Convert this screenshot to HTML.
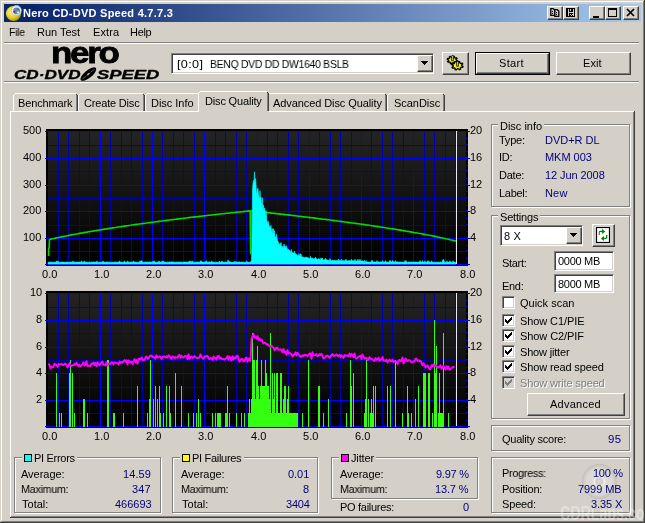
<!DOCTYPE html>
<html><head><meta charset="utf-8"><title>Nero CD-DVD Speed 4.7.7.3</title>
<style>
html,body{margin:0;padding:0}
body{width:645px;height:523px;overflow:hidden;background:#D4D0C8;position:relative;font:11px "Liberation Sans",sans-serif}
body>div,body>svg,body>span{position:absolute;display:block}
.t{will-change:transform;transform-origin:0 0;white-space:nowrap;line-height:13px;height:13px;font-size:11px;font-family:"Liberation Sans",sans-serif;color:#000}
.btn{background:#D4D0C8;box-sizing:border-box;border:1px solid;border-color:#fff #404040 #404040 #fff;box-shadow:inset -1px -1px 0 #808080}
.sunk{box-sizing:border-box;border:1px solid;border-color:#808080 #fff #fff #808080;box-shadow:inset 1px 1px 0 #404040,inset -1px -1px 0 #D4D0C8}
.grp i{position:absolute;box-sizing:border-box;left:0;top:0;right:1px;bottom:1px;border:1px solid #808080;box-shadow:inset 1px 1px 0 #fff,1px 1px 0 #fff}
.nero,.cds,.wm{will-change:transform}
.nero{left:50.6px;top:38px;font:bold 30px "Liberation Sans",sans-serif;letter-spacing:-2px;line-height:30px;transform:scaleX(1.165);transform-origin:0 0;color:#000;-webkit-text-stroke:0.8px #000}
.cds{-webkit-text-stroke:0.35px #000;top:68px;font:italic bold 12.5px "Liberation Sans",sans-serif;line-height:14px;color:#000;transform-origin:0 0;white-space:nowrap}
#cds1{left:13.5px;transform:scaleX(1.37)}
#cds2{left:96.5px;transform:scaleX(1.47)}
.wm{left:560px;top:503px;font:bold 20px "Liberation Sans",sans-serif;line-height:20px;color:rgba(255,255,255,0.36);white-space:nowrap;transform:scaleX(0.71);transform-origin:0 0}
</style></head><body>
<div style="left:1px;top:1px;width:1px;height:521px;background:#fff;"></div>
<div style="left:1px;top:1px;width:643px;height:1px;background:#fff;"></div>
<div style="left:644px;top:0px;width:1px;height:523px;background:#404040;"></div>
<div style="left:0px;top:522px;width:645px;height:1px;background:#404040;"></div>
<div style="left:643px;top:1px;width:1px;height:521px;background:#808080;"></div>
<div style="left:1px;top:521px;width:643px;height:1px;background:#808080;"></div>
<div style="left:4px;top:4px;width:637px;height:18px;background:linear-gradient(90deg,#0A246A 0%,#0A246A 4%,#A6CAF0 100%)"></div>
<svg style="left:5px;top:4px" width="18" height="18" viewBox="0 0 18 18">
<defs><radialGradient id="dg" cx="40%" cy="40%" r="65%"><stop offset="0" stop-color="#fff8a0"/><stop offset="0.55" stop-color="#e8d428"/><stop offset="1" stop-color="#a89010"/></radialGradient></defs>
<circle cx="8.5" cy="9.5" r="7.6" fill="url(#dg)"/>
<circle cx="11.3" cy="6.6" r="5" fill="#e8eef4" stroke="#b8c0c8" stroke-width="0.8"/>
<circle cx="11.6" cy="6.9" r="3.4" fill="#2c9be0"/>
<path d="M9.2 5.2 L13.2 8.4" stroke="#f06030" stroke-width="1.6"/>
<circle cx="9.3" cy="7.8" r="1" fill="#a01818"/><circle cx="12.8" cy="5.2" r="0.9" fill="#2a8a2a"/><circle cx="13" cy="8.6" r="1" fill="#fff"/>
</svg>
<div class="btn " style="left:547px;top:6px;width:16px;height:14px"></div>
<div class="btn " style="left:563px;top:6px;width:16px;height:14px"></div>
<div class="btn " style="left:589px;top:6px;width:16px;height:14px"></div>
<div class="btn " style="left:605px;top:6px;width:16px;height:14px"></div>
<div class="btn " style="left:623px;top:6px;width:16px;height:14px"></div>
<svg style="left:547px;top:6px" width="92" height="14" viewBox="0 0 92 14" shape-rendering="crispEdges">
<g fill="#D4D0C8" stroke="#000" stroke-width="1.300" shape-rendering="auto">
<path d="M3.800 2.700h2.400l1.600 1.400v5.300h-4z"/>
<path d="M7.800 3.700h2.400l1.600 1.400v5.300h-4z"/>
</g>
<rect x="5" y="5" width="1" height="1" fill="#000"/><rect x="5" y="7" width="1" height="1" fill="#000"/>
<rect x="9" y="6" width="1" height="1" fill="#000"/><rect x="9" y="8" width="1" height="1" fill="#000"/>
<rect x="19" y="2" width="9" height="9" fill="#000"/>
<g fill="#D4D0C8"><rect x="21" y="3" width="1" height="7"/><rect x="26" y="3" width="1" height="7"/><rect x="22" y="6" width="4" height="1"/>
<rect x="23" y="3" width="1" height="2"/><rect x="23" y="8" width="1" height="1"/><rect x="25" y="8" width="1" height="1"/><rect x="24" y="9" width="1" height="1"/></g>
<rect x="46" y="10" width="6" height="2" fill="#000"/>
<path d="M61.500 3.500h8v7h-8z" fill="none" stroke="#000" stroke-width="1"/><rect x="61" y="2" width="9" height="2" fill="#000"/>
<path d="M80 3l7 7M87 3l-7 7" stroke="#000" stroke-width="1.700" shape-rendering="auto"/>
</svg>
<div style="left:4px;top:42px;width:635px;height:1px;background:#808080;"></div>
<div style="left:4px;top:43px;width:635px;height:1px;background:#fff;"></div>
<div style="left:4px;top:81px;width:635px;height:1px;background:#808080;"></div>
<div style="left:4px;top:82px;width:635px;height:1px;background:#fff;"></div>
<div class="nero" id="nero">nero</div>
<div class="cds" id="cds1">CD·DVD</div>
<div class="cds" id="cds2">SPEED</div>
<svg style="left:78px;top:64px" width="21" height="20" viewBox="0 0 21 20">
<g transform="rotate(-39 10.400 10.100)"><ellipse cx="10.400" cy="10.100" rx="9.600" ry="3.800" fill="#000"/>
<path d="M2.500 10.100H18.300" stroke="#D4D0C8" stroke-width="0.500" stroke-dasharray="5.500 1.500 2 1.500 6" opacity="0.800"/>
<ellipse cx="10.400" cy="10.100" rx="1.700" ry="0.900" fill="#A8A6A0"/></g>
</svg>
<div class="sunk" style="left:171px;top:53px;width:263px;height:21px;background:#fff"></div>
<div class="btn " style="left:417px;top:55px;width:16px;height:17px"></div>
<svg style="left:421px;top:61px" width="7" height="4" viewBox="0 0 7 4" shape-rendering="crispEdges"><path d="M0 0h7L3.500 4z" fill="#000"/></svg>
<div class="btn " style="left:442px;top:52px;width:27px;height:23px"></div>
<svg style="left:442px;top:52px" width="27" height="23" viewBox="0 0 27 23">
<path d="M15.40 8.77L15.10 9.51L13.41 9.57L12.94 9.99L13.17 11.25L12.27 11.61L11.02 10.76L10.29 10.81L9.27 11.82L8.29 11.60L8.21 10.33L7.64 9.98L5.97 10.15L5.49 9.48L6.63 8.54L6.56 7.99L5.20 7.23L5.50 6.49L7.19 6.43L7.66 6.01L7.43 4.75L8.33 4.39L9.58 5.24L10.31 5.19L11.33 4.18L12.31 4.40L12.39 5.67L12.96 6.02L14.63 5.85L15.11 6.52L13.97 7.46L14.04 8.01Z" fill="#F6F600" stroke="#000" stroke-width="1.300" stroke-linejoin="round"/>
<path d="M9.500 8.800V4.300L10.400 3L11.400 4.300V8.800z" fill="#B8BCC8" stroke="#000" stroke-width="0.700"/>
<path d="M21.08 14.47L20.75 15.30L18.86 15.37L18.34 15.85L18.60 17.27L17.60 17.67L16.20 16.71L15.38 16.77L14.25 17.91L13.16 17.66L13.07 16.23L12.44 15.83L10.57 16.03L10.03 15.27L11.30 14.21L11.22 13.59L9.72 12.73L10.05 11.90L11.94 11.83L12.46 11.35L12.20 9.93L13.20 9.53L14.60 10.49L15.42 10.43L16.55 9.29L17.64 9.54L17.73 10.97L18.36 11.37L20.23 11.17L20.77 11.93L19.50 12.99L19.58 13.61Z" fill="#F6F600" stroke="#000" stroke-width="1.300" stroke-linejoin="round"/>
<path d="M14.600 14.300V10.200L15.500 9L16.500 10.200V14.300z" fill="#B8BCC8" stroke="#000" stroke-width="0.700"/>
</svg>
<div style="left:475px;top:52px;width:75px;height:23px;background:#000;"></div>
<div class="btn " style="left:476px;top:53px;width:73px;height:21px"></div>
<div class="btn " style="left:556px;top:52px;width:75px;height:23px"></div>
<div style="left:10px;top:111px;width:624px;height:1px;background:#fff;"></div>
<div style="left:10px;top:111px;width:1px;height:406px;background:#fff;"></div>
<div style="left:634px;top:111px;width:1px;height:407px;background:#404040;"></div>
<div style="left:10px;top:517px;width:625px;height:1px;background:#404040;"></div>
<div style="left:633px;top:112px;width:1px;height:405px;background:#808080;"></div>
<div style="left:11px;top:516px;width:623px;height:1px;background:#808080;"></div>
<div style="left:13px;top:93px;width:65px;height:18px;background:#D4D0C8;"></div>
<div style="left:13px;top:95px;width:1px;height:16px;background:#fff;"></div>
<div style="left:14px;top:94px;width:1px;height:1px;background:#fff;"></div>
<div style="left:15px;top:93px;width:61px;height:1px;background:#fff;"></div>
<div style="left:76px;top:95px;width:1px;height:16px;background:#808080;"></div>
<div style="left:77px;top:95px;width:1px;height:16px;background:#404040;"></div>
<div style="left:76px;top:94px;width:1px;height:1px;background:#404040;"></div>
<div style="left:78px;top:93px;width:67px;height:18px;background:#D4D0C8;"></div>
<div style="left:78px;top:95px;width:1px;height:16px;background:#fff;"></div>
<div style="left:79px;top:94px;width:1px;height:1px;background:#fff;"></div>
<div style="left:80px;top:93px;width:63px;height:1px;background:#fff;"></div>
<div style="left:143px;top:95px;width:1px;height:16px;background:#808080;"></div>
<div style="left:144px;top:95px;width:1px;height:16px;background:#404040;"></div>
<div style="left:143px;top:94px;width:1px;height:1px;background:#404040;"></div>
<div style="left:145px;top:93px;width:55px;height:18px;background:#D4D0C8;"></div>
<div style="left:145px;top:95px;width:1px;height:16px;background:#fff;"></div>
<div style="left:146px;top:94px;width:1px;height:1px;background:#fff;"></div>
<div style="left:147px;top:93px;width:53px;height:1px;background:#fff;"></div>
<div style="left:267px;top:93px;width:120px;height:18px;background:#D4D0C8;"></div>
<div style="left:267px;top:93px;width:118px;height:1px;background:#fff;"></div>
<div style="left:385px;top:95px;width:1px;height:16px;background:#808080;"></div>
<div style="left:386px;top:95px;width:1px;height:16px;background:#404040;"></div>
<div style="left:385px;top:94px;width:1px;height:1px;background:#404040;"></div>
<div style="left:387px;top:93px;width:58px;height:18px;background:#D4D0C8;"></div>
<div style="left:387px;top:95px;width:1px;height:16px;background:#fff;"></div>
<div style="left:388px;top:94px;width:1px;height:1px;background:#fff;"></div>
<div style="left:389px;top:93px;width:54px;height:1px;background:#fff;"></div>
<div style="left:443px;top:95px;width:1px;height:16px;background:#808080;"></div>
<div style="left:444px;top:95px;width:1px;height:16px;background:#404040;"></div>
<div style="left:443px;top:94px;width:1px;height:1px;background:#404040;"></div>
<div style="left:198px;top:91px;width:71px;height:21px;background:#D4D0C8;"></div>
<div style="left:198px;top:93px;width:1px;height:19px;background:#fff;"></div>
<div style="left:199px;top:92px;width:1px;height:1px;background:#fff;"></div>
<div style="left:200px;top:91px;width:67px;height:1px;background:#fff;"></div>
<div style="left:267px;top:93px;width:1px;height:18px;background:#808080;"></div>
<div style="left:268px;top:93px;width:1px;height:18px;background:#404040;"></div>
<div style="left:267px;top:92px;width:1px;height:1px;background:#404040;"></div>
<svg style="left:0;top:0" width="645" height="523" viewBox="0 0 645 523" shape-rendering="crispEdges"><defs><linearGradient id="cg" x1="0" y1="0" x2="0" y2="1"><stop offset="0" stop-color="#242424"/><stop offset="1" stop-color="#000"/></linearGradient></defs><rect x="46" y="129" width="422" height="137" fill="#000"/><rect x="48" y="131" width="418" height="134" fill="url(#cg)"/><rect x="58" y="131" width="1" height="134" fill="#0000B0"/><rect x="68" y="131" width="1" height="134" fill="#0000B0"/><rect x="79" y="131" width="1" height="134" fill="#0000B0"/><rect x="89" y="131" width="1" height="134" fill="#0000B0"/><rect x="100" y="131" width="1" height="134" fill="#0000FF"/><rect x="110" y="131" width="1" height="134" fill="#0000B0"/><rect x="121" y="131" width="1" height="134" fill="#0000B0"/><rect x="131" y="131" width="1" height="134" fill="#0000B0"/><rect x="142" y="131" width="1" height="134" fill="#0000B0"/><rect x="152" y="131" width="1" height="134" fill="#0000FF"/><rect x="162" y="131" width="1" height="134" fill="#0000B0"/><rect x="173" y="131" width="1" height="134" fill="#0000B0"/><rect x="183" y="131" width="1" height="134" fill="#0000B0"/><rect x="194" y="131" width="1" height="134" fill="#0000B0"/><rect x="204" y="131" width="1" height="134" fill="#0000FF"/><rect x="215" y="131" width="1" height="134" fill="#0000B0"/><rect x="225" y="131" width="1" height="134" fill="#0000B0"/><rect x="236" y="131" width="1" height="134" fill="#0000B0"/><rect x="246" y="131" width="1" height="134" fill="#0000B0"/><rect x="257" y="131" width="1" height="134" fill="#0000FF"/><rect x="267" y="131" width="1" height="134" fill="#0000B0"/><rect x="277" y="131" width="1" height="134" fill="#0000B0"/><rect x="288" y="131" width="1" height="134" fill="#0000B0"/><rect x="298" y="131" width="1" height="134" fill="#0000B0"/><rect x="309" y="131" width="1" height="134" fill="#0000FF"/><rect x="319" y="131" width="1" height="134" fill="#0000B0"/><rect x="330" y="131" width="1" height="134" fill="#0000B0"/><rect x="340" y="131" width="1" height="134" fill="#0000B0"/><rect x="351" y="131" width="1" height="134" fill="#0000B0"/><rect x="361" y="131" width="1" height="134" fill="#0000FF"/><rect x="371" y="131" width="1" height="134" fill="#0000B0"/><rect x="382" y="131" width="1" height="134" fill="#0000B0"/><rect x="392" y="131" width="1" height="134" fill="#0000B0"/><rect x="403" y="131" width="1" height="134" fill="#0000B0"/><rect x="413" y="131" width="1" height="134" fill="#0000FF"/><rect x="424" y="131" width="1" height="134" fill="#0000B0"/><rect x="434" y="131" width="1" height="134" fill="#0000B0"/><rect x="445" y="131" width="1" height="134" fill="#0000B0"/><rect x="455" y="131" width="1" height="134" fill="#0000B0"/><rect x="45" y="264" width="425" height="1" fill="#0000FF"/><rect x="48" y="251" width="419" height="1" fill="#0000B0"/><rect x="45" y="238" width="425" height="1" fill="#0000FF"/><rect x="48" y="225" width="419" height="1" fill="#0000B0"/><rect x="45" y="211" width="425" height="1" fill="#0000FF"/><rect x="48" y="198" width="419" height="1" fill="#0000B0"/><rect x="45" y="185" width="425" height="1" fill="#0000FF"/><rect x="48" y="171" width="419" height="1" fill="#0000B0"/><rect x="45" y="158" width="425" height="1" fill="#0000FF"/><rect x="48" y="145" width="419" height="1" fill="#0000B0"/><rect x="45" y="131" width="425" height="1" fill="#0000FF"/><rect x="466" y="264" width="2" height="1" fill="#0000E8"/><rect x="466" y="258" width="2" height="1" fill="#0000E8"/><rect x="466" y="250" width="2" height="1" fill="#0000E8"/><rect x="466" y="245" width="2" height="1" fill="#0000E8"/><rect x="466" y="237" width="2" height="1" fill="#0000E8"/><rect x="466" y="231" width="2" height="1" fill="#0000E8"/><rect x="466" y="224" width="2" height="1" fill="#0000E8"/><rect x="466" y="218" width="2" height="1" fill="#0000E8"/><rect x="466" y="210" width="2" height="1" fill="#0000E8"/><rect x="466" y="205" width="2" height="1" fill="#0000E8"/><rect x="466" y="197" width="2" height="1" fill="#0000E8"/><rect x="466" y="191" width="2" height="1" fill="#0000E8"/><rect x="466" y="184" width="2" height="1" fill="#0000E8"/><rect x="466" y="178" width="2" height="1" fill="#0000E8"/><rect x="466" y="170" width="2" height="1" fill="#0000E8"/><rect x="466" y="165" width="2" height="1" fill="#0000E8"/><rect x="466" y="157" width="2" height="1" fill="#0000E8"/><rect x="466" y="151" width="2" height="1" fill="#0000E8"/><rect x="466" y="144" width="2" height="1" fill="#0000E8"/><rect x="466" y="138" width="2" height="1" fill="#0000E8"/><rect x="466" y="131" width="2" height="1" fill="#0000E8"/><rect x="46" y="291" width="422" height="137" fill="#000"/><rect x="48" y="293" width="418" height="134" fill="url(#cg)"/><rect x="58" y="293" width="1" height="134" fill="#0000B0"/><rect x="68" y="293" width="1" height="134" fill="#0000B0"/><rect x="79" y="293" width="1" height="134" fill="#0000B0"/><rect x="89" y="293" width="1" height="134" fill="#0000B0"/><rect x="100" y="293" width="1" height="134" fill="#0000FF"/><rect x="110" y="293" width="1" height="134" fill="#0000B0"/><rect x="121" y="293" width="1" height="134" fill="#0000B0"/><rect x="131" y="293" width="1" height="134" fill="#0000B0"/><rect x="142" y="293" width="1" height="134" fill="#0000B0"/><rect x="152" y="293" width="1" height="134" fill="#0000FF"/><rect x="162" y="293" width="1" height="134" fill="#0000B0"/><rect x="173" y="293" width="1" height="134" fill="#0000B0"/><rect x="183" y="293" width="1" height="134" fill="#0000B0"/><rect x="194" y="293" width="1" height="134" fill="#0000B0"/><rect x="204" y="293" width="1" height="134" fill="#0000FF"/><rect x="215" y="293" width="1" height="134" fill="#0000B0"/><rect x="225" y="293" width="1" height="134" fill="#0000B0"/><rect x="236" y="293" width="1" height="134" fill="#0000B0"/><rect x="246" y="293" width="1" height="134" fill="#0000B0"/><rect x="257" y="293" width="1" height="134" fill="#0000FF"/><rect x="267" y="293" width="1" height="134" fill="#0000B0"/><rect x="277" y="293" width="1" height="134" fill="#0000B0"/><rect x="288" y="293" width="1" height="134" fill="#0000B0"/><rect x="298" y="293" width="1" height="134" fill="#0000B0"/><rect x="309" y="293" width="1" height="134" fill="#0000FF"/><rect x="319" y="293" width="1" height="134" fill="#0000B0"/><rect x="330" y="293" width="1" height="134" fill="#0000B0"/><rect x="340" y="293" width="1" height="134" fill="#0000B0"/><rect x="351" y="293" width="1" height="134" fill="#0000B0"/><rect x="361" y="293" width="1" height="134" fill="#0000FF"/><rect x="371" y="293" width="1" height="134" fill="#0000B0"/><rect x="382" y="293" width="1" height="134" fill="#0000B0"/><rect x="392" y="293" width="1" height="134" fill="#0000B0"/><rect x="403" y="293" width="1" height="134" fill="#0000B0"/><rect x="413" y="293" width="1" height="134" fill="#0000FF"/><rect x="424" y="293" width="1" height="134" fill="#0000B0"/><rect x="434" y="293" width="1" height="134" fill="#0000B0"/><rect x="445" y="293" width="1" height="134" fill="#0000B0"/><rect x="455" y="293" width="1" height="134" fill="#0000B0"/><rect x="45" y="426" width="425" height="1" fill="#0000FF"/><rect x="48" y="413" width="419" height="1" fill="#0000B0"/><rect x="45" y="400" width="425" height="1" fill="#0000FF"/><rect x="48" y="387" width="419" height="1" fill="#0000B0"/><rect x="45" y="373" width="425" height="1" fill="#0000FF"/><rect x="48" y="360" width="419" height="1" fill="#0000B0"/><rect x="45" y="347" width="425" height="1" fill="#0000FF"/><rect x="48" y="333" width="419" height="1" fill="#0000B0"/><rect x="45" y="320" width="425" height="1" fill="#0000FF"/><rect x="48" y="307" width="419" height="1" fill="#0000B0"/><rect x="45" y="293" width="425" height="1" fill="#0000FF"/><rect x="466" y="426" width="2" height="1" fill="#0000E8"/><rect x="466" y="420" width="2" height="1" fill="#0000E8"/><rect x="466" y="412" width="2" height="1" fill="#0000E8"/><rect x="466" y="407" width="2" height="1" fill="#0000E8"/><rect x="466" y="399" width="2" height="1" fill="#0000E8"/><rect x="466" y="393" width="2" height="1" fill="#0000E8"/><rect x="466" y="386" width="2" height="1" fill="#0000E8"/><rect x="466" y="380" width="2" height="1" fill="#0000E8"/><rect x="466" y="372" width="2" height="1" fill="#0000E8"/><rect x="466" y="367" width="2" height="1" fill="#0000E8"/><rect x="466" y="359" width="2" height="1" fill="#0000E8"/><rect x="466" y="353" width="2" height="1" fill="#0000E8"/><rect x="466" y="346" width="2" height="1" fill="#0000E8"/><rect x="466" y="340" width="2" height="1" fill="#0000E8"/><rect x="466" y="332" width="2" height="1" fill="#0000E8"/><rect x="466" y="327" width="2" height="1" fill="#0000E8"/><rect x="466" y="319" width="2" height="1" fill="#0000E8"/><rect x="466" y="313" width="2" height="1" fill="#0000E8"/><rect x="466" y="306" width="2" height="1" fill="#0000E8"/><rect x="466" y="300" width="2" height="1" fill="#0000E8"/><rect x="466" y="293" width="2" height="1" fill="#0000E8"/><path shape-rendering="geometricPrecision" d="M48.6 256.0 L48.6 249.0 L49.2 247.5 L49.5 239.5 L51.0 239.1 L52.5 238.8 L54.0 238.5 L55.5 238.1 L57.0 237.8 L58.5 237.5 L60.0 237.2 L61.5 236.9 L63.0 236.6 L64.5 236.3 L66.0 236.0 L67.5 235.7 L69.0 235.4 L70.5 235.1 L72.0 234.8 L73.5 234.5 L75.0 234.2 L76.5 234.0 L78.0 233.7 L79.5 233.4 L81.0 233.1 L82.5 232.9 L84.0 232.6 L85.5 232.3 L87.0 232.1 L88.5 231.8 L90.0 231.6 L91.5 231.3 L93.0 231.1 L94.5 230.8 L96.0 230.6 L97.5 230.3 L99.0 230.1 L100.5 229.8 L102.0 229.6 L103.5 229.3 L105.0 229.1 L106.5 228.9 L108.0 228.6 L109.5 228.4 L111.0 228.2 L112.5 227.9 L114.0 227.7 L115.5 227.5 L117.0 227.2 L118.5 227.0 L120.0 226.8 L121.5 226.6 L123.0 226.3 L124.5 226.1 L126.0 225.9 L127.5 225.7 L129.0 225.5 L130.5 225.3 L132.0 225.0 L133.5 224.8 L135.0 224.6 L136.5 224.4 L138.0 224.2 L139.5 224.0 L141.0 223.8 L142.5 223.6 L144.0 223.4 L145.5 223.2 L147.0 223.0 L148.5 222.8 L150.0 222.6 L151.5 222.4 L153.0 222.2 L154.5 222.0 L156.0 221.8 L157.5 221.6 L159.0 221.4 L160.5 221.2 L162.0 221.0 L163.5 220.8 L165.0 220.6 L166.5 220.4 L168.0 220.2 L169.5 220.0 L171.0 219.8 L172.5 219.6 L174.0 219.5 L175.5 219.3 L177.0 219.1 L178.5 218.9 L180.0 218.7 L181.5 218.5 L183.0 218.4 L184.5 218.2 L186.0 218.0 L187.5 217.8 L189.0 217.6 L190.5 217.4 L192.0 217.3 L193.5 217.1 L195.0 216.9 L196.5 216.7 L198.0 216.6 L199.5 216.4 L201.0 216.2 L202.5 216.0 L204.0 215.9 L205.5 215.7 L207.0 215.5 L208.5 215.3 L210.0 215.2 L211.5 215.0 L213.0 214.8 L214.5 214.7 L216.0 214.5 L217.5 214.3 L219.0 214.2 L220.5 214.0 L222.0 213.8 L223.5 213.7 L225.0 213.5 L226.5 213.3 L228.0 213.2 L229.5 213.0 L231.0 212.8 L232.5 212.7 L234.0 212.5 L235.5 212.4 L237.0 212.2 L238.5 212.0 L240.0 211.9 L241.5 211.7 L243.0 211.6 L244.5 211.4 L246.0 211.2 L247.5 211.1 L249.0 210.9 L250.5 210.8 L250.2 210.8 L250.6 253.5 L250.9 211.0 L252.0 211.0 L253.5 211.1 L255.0 211.3 L256.5 211.5 L258.0 211.6 L259.5 211.8 L261.0 211.9 L262.5 212.1 L264.0 212.3 L265.5 212.4 L267.0 212.6 L268.5 212.8 L270.0 212.9 L271.5 213.1 L273.0 213.3 L274.5 213.4 L276.0 213.6 L277.5 213.8 L279.0 213.9 L280.5 214.1 L282.0 214.3 L283.5 214.4 L285.0 214.6 L286.5 214.8 L288.0 214.9 L289.5 215.1 L291.0 215.3 L292.5 215.5 L294.0 215.6 L295.5 215.8 L297.0 216.0 L298.5 216.2 L300.0 216.3 L301.5 216.5 L303.0 216.7 L304.5 216.9 L306.0 217.0 L307.5 217.2 L309.0 217.4 L310.5 217.6 L312.0 217.8 L313.5 217.9 L315.0 218.1 L316.5 218.3 L318.0 218.5 L319.5 218.7 L321.0 218.9 L322.5 219.1 L324.0 219.2 L325.5 219.4 L327.0 219.6 L328.5 219.8 L330.0 220.0 L331.5 220.2 L333.0 220.4 L334.5 220.6 L336.0 220.8 L337.5 221.0 L339.0 221.2 L340.5 221.4 L342.0 221.6 L343.5 221.8 L345.0 222.0 L346.5 222.2 L348.0 222.4 L349.5 222.6 L351.0 222.8 L352.5 223.0 L354.0 223.2 L355.5 223.4 L357.0 223.6 L358.5 223.8 L360.0 224.0 L361.5 224.2 L363.0 224.4 L364.5 224.6 L366.0 224.9 L367.5 225.1 L369.0 225.3 L370.5 225.5 L372.0 225.7 L373.5 225.9 L375.0 226.2 L376.5 226.4 L378.0 226.6 L379.5 226.8 L381.0 227.1 L382.5 227.3 L384.0 227.5 L385.5 227.7 L387.0 228.0 L388.5 228.2 L390.0 228.5 L391.5 228.7 L393.0 228.9 L394.5 229.2 L396.0 229.4 L397.5 229.7 L399.0 229.9 L400.5 230.1 L402.0 230.4 L403.5 230.6 L405.0 230.9 L406.5 231.2 L408.0 231.4 L409.5 231.7 L411.0 231.9 L412.5 232.2 L414.0 232.5 L415.5 232.7 L417.0 233.0 L418.5 233.3 L420.0 233.5 L421.5 233.8 L423.0 234.1 L424.5 234.4 L426.0 234.7 L427.5 235.0 L429.0 235.2 L430.5 235.5 L432.0 235.8 L433.5 236.1 L435.0 236.4 L436.5 236.7 L438.0 237.1 L439.5 237.4 L441.0 237.7 L442.5 238.0 L444.0 238.3 L445.5 238.7 L447.0 239.0 L448.5 239.3 L450.0 239.7 L451.5 240.0 L453.0 240.4 L454.5 240.7 L456.0 241.1" fill="none" stroke="#00DC00" stroke-width="1.600" stroke-linejoin="round"/><path shape-rendering="geometricPrecision" d="M48 264 L48.0 262.1 L48.5 262.2 L49.0 262.0 L49.5 262.3 L50.0 262.0 L50.5 262.1 L51.0 262.3 L51.5 262.0 L52.0 262.3 L52.5 262.1 L53.0 262.3 L53.5 262.3 L54.0 262.1 L54.5 261.9 L55.0 262.2 L55.5 262.2 L56.0 262.0 L56.5 260.8 L57.0 262.0 L57.5 262.1 L58.0 260.8 L58.5 262.3 L59.0 261.9 L59.5 262.2 L60.0 262.2 L60.5 262.2 L61.0 262.1 L61.5 261.9 L62.0 262.2 L62.5 262.0 L63.0 262.0 L63.5 262.1 L64.0 262.0 L64.5 262.3 L65.0 262.3 L65.5 262.2 L66.0 262.0 L66.5 262.1 L67.0 262.1 L67.5 262.0 L68.0 262.1 L68.5 262.2 L69.0 261.9 L69.5 262.0 L70.0 262.2 L70.5 262.0 L71.0 262.0 L71.5 261.9 L72.0 261.9 L72.5 262.2 L73.0 260.8 L73.5 262.2 L74.0 262.1 L74.5 261.9 L75.0 262.2 L75.5 262.1 L76.0 262.3 L76.5 262.0 L77.0 261.9 L77.5 262.0 L78.0 261.9 L78.5 262.1 L79.0 262.0 L79.5 262.0 L80.0 262.0 L80.5 262.1 L81.0 261.9 L81.5 260.8 L82.0 262.1 L82.5 262.0 L83.0 262.3 L83.5 261.9 L84.0 262.0 L84.5 260.8 L85.0 261.9 L85.5 262.2 L86.0 262.1 L86.5 262.0 L87.0 262.3 L87.5 262.1 L88.0 262.2 L88.5 262.2 L89.0 262.3 L89.5 261.9 L90.0 262.2 L90.5 262.2 L91.0 262.1 L91.5 261.9 L92.0 262.3 L92.5 262.1 L93.0 262.0 L93.5 261.9 L94.0 261.9 L94.5 261.9 L95.0 262.2 L95.5 262.1 L96.0 262.1 L96.5 261.9 L97.0 260.8 L97.5 262.2 L98.0 262.2 L98.5 262.2 L99.0 262.2 L99.5 262.1 L100.0 262.0 L100.5 262.2 L101.0 262.3 L101.5 262.1 L102.0 262.1 L102.5 262.0 L103.0 260.8 L103.5 262.0 L104.0 262.0 L104.5 262.0 L105.0 262.0 L105.5 262.3 L106.0 261.9 L106.5 261.9 L107.0 261.9 L107.5 261.9 L108.0 262.1 L108.5 262.1 L109.0 262.2 L109.5 262.0 L110.0 262.3 L110.5 262.3 L111.0 262.2 L111.5 262.2 L112.0 262.1 L112.5 262.3 L113.0 262.3 L113.5 262.2 L114.0 262.2 L114.5 262.1 L115.0 262.3 L115.5 261.9 L116.0 262.0 L116.5 262.2 L117.0 262.2 L117.5 262.1 L118.0 262.1 L118.5 262.2 L119.0 261.9 L119.5 260.8 L120.0 262.1 L120.5 262.1 L121.0 262.3 L121.5 262.2 L122.0 262.1 L122.5 262.2 L123.0 261.9 L123.5 262.2 L124.0 262.3 L124.5 260.8 L125.0 262.0 L125.5 262.2 L126.0 262.0 L126.5 262.3 L127.0 262.0 L127.5 260.8 L128.0 261.9 L128.5 262.0 L129.0 262.2 L129.5 262.1 L130.0 262.2 L130.5 261.9 L131.0 262.0 L131.5 261.9 L132.0 262.1 L132.5 262.2 L133.0 261.9 L133.5 260.8 L134.0 261.9 L134.5 261.9 L135.0 261.9 L135.5 261.9 L136.0 262.2 L136.5 262.0 L137.0 262.1 L137.5 262.3 L138.0 262.3 L138.5 262.2 L139.0 262.2 L139.5 262.0 L140.0 260.8 L140.5 262.1 L141.0 260.8 L141.5 260.8 L142.0 260.8 L142.5 262.1 L143.0 262.2 L143.5 262.2 L144.0 262.2 L144.5 262.2 L145.0 262.0 L145.5 261.8 L146.0 261.9 L146.5 262.1 L147.0 262.0 L147.5 261.9 L148.0 262.3 L148.5 262.0 L149.0 261.8 L149.5 261.9 L150.0 261.9 L150.5 262.1 L151.0 262.2 L151.5 261.9 L152.0 262.1 L152.5 261.9 L153.0 260.8 L153.5 262.1 L154.0 262.1 L154.5 260.8 L155.0 261.9 L155.5 262.2 L156.0 262.2 L156.5 262.2 L157.0 261.8 L157.5 261.9 L158.0 262.2 L158.5 261.9 L159.0 260.8 L159.5 262.0 L160.0 262.1 L160.5 262.0 L161.0 262.2 L161.5 262.3 L162.0 260.8 L162.5 262.0 L163.0 262.0 L163.5 260.8 L164.0 262.1 L164.5 261.9 L165.0 261.9 L165.5 262.2 L166.0 262.2 L166.5 262.2 L167.0 262.2 L167.5 262.0 L168.0 262.2 L168.5 262.1 L169.0 262.2 L169.5 261.8 L170.0 262.1 L170.5 262.1 L171.0 262.0 L171.5 261.8 L172.0 262.1 L172.5 261.8 L173.0 262.0 L173.5 262.0 L174.0 262.0 L174.5 262.3 L175.0 262.1 L175.5 262.2 L176.0 262.3 L176.5 261.9 L177.0 262.2 L177.5 262.1 L178.0 261.9 L178.5 262.0 L179.0 262.1 L179.5 262.0 L180.0 262.0 L180.5 261.9 L181.0 262.2 L181.5 262.0 L182.0 262.2 L182.5 262.2 L183.0 261.9 L183.5 262.0 L184.0 262.0 L184.5 261.9 L185.0 261.8 L185.5 262.1 L186.0 262.0 L186.5 262.0 L187.0 262.0 L187.5 262.0 L188.0 262.1 L188.5 262.0 L189.0 262.1 L189.5 260.8 L190.0 262.0 L190.5 261.9 L191.0 260.8 L191.5 262.2 L192.0 262.0 L192.5 260.8 L193.0 261.9 L193.5 262.2 L194.0 262.2 L194.5 262.1 L195.0 262.3 L195.5 262.2 L196.0 262.3 L196.5 262.0 L197.0 261.9 L197.5 261.9 L198.0 262.2 L198.5 261.9 L199.0 262.0 L199.5 262.2 L200.0 261.9 L200.5 260.8 L201.0 260.8 L201.5 261.1 L202.0 261.9 L202.5 262.1 L203.0 262.1 L203.5 262.1 L204.0 262.3 L204.5 262.1 L205.0 262.1 L205.5 262.0 L206.0 260.8 L206.5 260.8 L207.0 262.2 L207.5 261.9 L208.0 262.2 L208.5 261.8 L209.0 262.2 L209.5 261.8 L210.0 261.9 L210.5 262.3 L211.0 262.1 L211.5 260.8 L212.0 261.9 L212.5 261.9 L213.0 261.9 L213.5 262.1 L214.0 261.8 L214.5 262.2 L215.0 262.2 L215.5 262.2 L216.0 262.2 L216.5 262.1 L217.0 262.2 L217.5 262.2 L218.0 262.3 L218.5 262.3 L219.0 262.0 L219.5 261.1 L220.0 262.2 L220.5 262.1 L221.0 261.9 L221.5 262.0 L222.0 260.8 L222.5 261.9 L223.0 262.0 L223.5 262.1 L224.0 262.2 L224.5 261.9 L225.0 262.2 L225.5 261.9 L226.0 262.0 L226.5 262.2 L227.0 262.1 L227.5 262.1 L228.0 259.8 L228.5 262.0 L229.0 260.8 L229.5 262.1 L230.0 262.1 L230.5 262.0 L231.0 262.0 L231.5 262.2 L232.0 262.1 L232.5 262.3 L233.0 262.2 L233.5 262.0 L234.0 262.0 L234.5 261.9 L235.0 261.1 L235.5 262.2 L236.0 262.0 L236.5 261.9 L237.0 262.0 L237.5 261.9 L238.0 262.0 L238.5 261.9 L239.0 261.9 L239.5 261.9 L240.0 262.0 L240.5 262.3 L241.0 262.1 L241.5 261.9 L242.0 262.0 L242.5 262.0 L243.0 262.3 L243.5 261.9 L244.0 262.0 L244.5 262.3 L245.0 262.2 L245.5 262.2 L246.0 262.2 L246.5 260.8 L247.0 262.1 L247.5 262.0 L248.0 262.0 L248.5 262.3 L249.0 262.2 L249.5 262.1 L250.0 262.3 L250.5 262.2 L251.0 261.1 L251.5 261.1 L252.0 238.8 L252.5 189.4 L253.0 183.3 L253.5 180.4 L254.0 183.6 L254.5 171.8 L255.0 184.9 L255.5 178.5 L256.0 182.7 L256.5 195.0 L257.0 191.9 L257.5 188.9 L258.0 188.3 L258.5 194.8 L259.0 197.6 L259.5 198.2 L260.0 190.6 L260.5 199.5 L261.0 197.2 L261.5 204.6 L262.0 202.3 L262.5 197.8 L263.0 211.1 L263.5 205.0 L264.0 210.3 L264.5 208.0 L265.0 210.8 L265.5 216.7 L266.0 210.6 L266.5 216.1 L267.0 222.2 L267.5 223.8 L268.0 220.9 L268.5 222.4 L269.0 224.7 L269.5 227.2 L270.0 226.6 L270.5 228.1 L271.0 225.3 L271.5 232.8 L272.0 228.6 L272.5 228.9 L273.0 234.5 L273.5 228.8 L274.0 232.3 L274.5 230.7 L275.0 236.5 L275.5 236.9 L276.0 237.7 L276.5 234.2 L277.0 238.6 L277.5 240.7 L278.0 241.2 L278.5 242.8 L279.0 244.7 L279.5 245.3 L280.0 243.1 L280.5 245.9 L281.0 242.4 L281.5 246.5 L282.0 246.7 L282.5 246.0 L283.0 247.4 L283.5 246.9 L284.0 243.9 L284.5 245.7 L285.0 246.4 L285.5 247.4 L286.0 245.6 L286.5 245.9 L287.0 248.7 L287.5 248.6 L288.0 251.0 L288.5 249.2 L289.0 250.4 L289.5 249.8 L290.0 250.5 L290.5 251.7 L291.0 252.6 L291.5 249.5 L292.0 253.0 L292.5 252.4 L293.0 252.9 L293.5 253.3 L294.0 252.5 L294.5 251.0 L295.0 254.1 L295.5 253.4 L296.0 254.4 L296.5 254.1 L297.0 254.7 L297.5 255.4 L298.0 255.6 L298.5 255.7 L299.0 253.4 L299.5 255.5 L300.0 256.1 L300.5 253.9 L301.0 253.9 L301.5 256.2 L302.0 256.9 L302.5 256.9 L303.0 257.2 L303.5 257.0 L304.0 257.5 L304.5 257.5 L305.0 257.5 L305.5 257.2 L306.0 256.8 L306.5 257.1 L307.0 257.6 L307.5 257.7 L308.0 257.6 L308.5 257.9 L309.0 258.0 L309.5 258.5 L310.0 258.3 L310.5 256.3 L311.0 258.6 L311.5 258.2 L312.0 258.1 L312.5 257.9 L313.0 258.8 L313.5 258.7 L314.0 258.8 L314.5 258.7 L315.0 258.7 L315.5 257.0 L316.0 258.4 L316.5 258.5 L317.0 259.4 L317.5 259.5 L318.0 258.8 L318.5 258.7 L319.0 259.2 L319.5 259.1 L320.0 259.8 L320.5 259.4 L321.0 257.8 L321.5 259.1 L322.0 259.1 L322.5 257.9 L323.0 259.8 L323.5 260.0 L324.0 260.0 L324.5 259.7 L325.0 259.6 L325.5 258.2 L326.0 259.6 L326.5 259.7 L327.0 259.7 L327.5 260.0 L328.0 260.0 L328.5 260.4 L329.0 259.9 L329.5 260.4 L330.0 258.6 L330.5 260.1 L331.0 260.4 L331.5 260.5 L332.0 260.4 L332.5 260.1 L333.0 260.1 L333.5 260.6 L334.0 260.6 L334.5 260.3 L335.0 260.3 L335.5 260.4 L336.0 260.6 L336.5 260.3 L337.0 260.8 L337.5 260.6 L338.0 260.4 L338.5 258.9 L339.0 260.3 L339.5 260.2 L340.0 260.5 L340.5 260.7 L341.0 260.7 L341.5 259.0 L342.0 260.4 L342.5 260.7 L343.0 260.9 L343.5 260.6 L344.0 260.5 L344.5 260.7 L345.0 260.8 L345.5 260.5 L346.0 259.1 L346.5 260.8 L347.0 261.0 L347.5 260.8 L348.0 260.7 L348.5 260.5 L349.0 260.9 L349.5 260.5 L350.0 260.5 L350.5 260.7 L351.0 260.9 L351.5 259.2 L352.0 260.8 L352.5 260.5 L353.0 260.9 L353.5 260.9 L354.0 260.5 L354.5 260.8 L355.0 259.2 L355.5 260.7 L356.0 260.9 L356.5 260.9 L357.0 260.8 L357.5 260.6 L358.0 259.2 L358.5 261.0 L359.0 260.8 L359.5 260.9 L360.0 259.2 L360.5 261.0 L361.0 261.0 L361.5 261.0 L362.0 260.8 L362.5 260.8 L363.0 261.1 L363.5 261.5 L364.0 260.5 L364.5 260.5 L365.0 262.0 L365.5 262.0 L366.0 260.5 L366.5 261.8 L367.0 262.1 L367.5 261.8 L368.0 262.0 L368.5 262.0 L369.0 262.0 L369.5 262.0 L370.0 262.1 L370.5 262.0 L371.0 262.0 L371.5 260.5 L372.0 262.1 L372.5 260.5 L373.0 262.0 L373.5 262.0 L374.0 261.8 L374.5 261.8 L375.0 261.9 L375.5 262.1 L376.0 261.9 L376.5 262.0 L377.0 260.5 L377.5 262.1 L378.0 262.0 L378.5 261.8 L379.0 262.1 L379.5 262.0 L380.0 261.8 L380.5 261.8 L381.0 262.1 L381.5 262.1 L382.0 262.1 L382.5 260.6 L383.0 262.0 L383.5 261.8 L384.0 261.8 L384.5 262.0 L385.0 262.0 L385.5 260.5 L386.0 261.9 L386.5 262.0 L387.0 261.9 L387.5 262.0 L388.0 262.0 L388.5 262.2 L389.0 261.8 L389.5 260.6 L390.0 261.9 L390.5 260.6 L391.0 262.2 L391.5 262.1 L392.0 262.0 L392.5 260.6 L393.0 260.6 L393.5 262.0 L394.0 262.1 L394.5 262.0 L395.0 262.0 L395.5 260.6 L396.0 262.1 L396.5 261.8 L397.0 261.9 L397.5 261.8 L398.0 261.9 L398.5 261.9 L399.0 262.0 L399.5 262.1 L400.0 262.0 L400.5 261.9 L401.0 262.2 L401.5 262.1 L402.0 261.9 L402.5 262.1 L403.0 262.2 L403.5 262.2 L404.0 262.0 L404.5 262.1 L405.0 260.6 L405.5 261.8 L406.0 260.6 L406.5 262.1 L407.0 262.2 L407.5 262.2 L408.0 262.0 L408.5 261.9 L409.0 262.0 L409.5 262.1 L410.0 262.0 L410.5 262.0 L411.0 261.9 L411.5 261.9 L412.0 261.9 L412.5 261.9 L413.0 262.2 L413.5 261.9 L414.0 262.1 L414.5 262.0 L415.0 262.1 L415.5 261.9 L416.0 262.1 L416.5 262.1 L417.0 262.1 L417.5 262.2 L418.0 261.9 L418.5 262.0 L419.0 262.1 L419.5 262.1 L420.0 260.6 L420.5 262.0 L421.0 262.1 L421.5 261.9 L422.0 262.0 L422.5 260.6 L423.0 262.2 L423.5 262.0 L424.0 261.9 L424.5 261.9 L425.0 260.7 L425.5 262.2 L426.0 262.1 L426.5 262.2 L427.0 262.2 L427.5 260.7 L428.0 262.0 L428.5 260.7 L429.0 262.1 L429.5 261.9 L430.0 262.1 L430.5 262.2 L431.0 261.9 L431.5 260.7 L432.0 262.2 L432.5 262.0 L433.0 262.0 L433.5 262.2 L434.0 262.1 L434.5 262.2 L435.0 262.2 L435.5 262.2 L436.0 262.0 L436.5 262.0 L437.0 262.2 L437.5 262.3 L438.0 262.1 L438.5 262.0 L439.0 262.2 L439.5 262.2 L440.0 262.2 L440.5 262.0 L441.0 262.1 L441.5 262.3 L442.0 262.2 L442.5 260.6 L443.0 259.6 L443.5 259.4 L444.0 260.4 L444.5 262.2 L445.0 262.0 L445.5 262.1 L446.0 262.2 L446.5 262.2 L447.0 260.7 L447.5 262.2 L448.0 262.1 L448.5 262.1 L449.0 262.1 L449.5 261.9 L450.0 260.7 L450.5 262.1 L451.0 262.2 L451.5 262.0 L452.0 262.2 L452.5 262.3 L453.0 260.7 L453.5 262.1 L454.0 262.0 L454.5 262.1 L455.0 261.9 L455.5 262.1 L456 264 Z" fill="#00FFFF" stroke="#00FFFF" stroke-width="0.600"/><rect x="56" y="373" width="1" height="54" fill="#33FF11"/><rect x="59" y="413" width="1" height="14" fill="#33FF11"/><rect x="61" y="413" width="1" height="14" fill="#33FF11"/><rect x="69" y="373" width="2" height="54" fill="#33FF11"/><rect x="70" y="360" width="1" height="67" fill="#33FF11"/><rect x="72" y="373" width="1" height="54" fill="#33FF11"/><rect x="74" y="413" width="1" height="14" fill="#33FF11"/><rect x="83" y="399" width="2" height="28" fill="#33FF11"/><rect x="87" y="413" width="1" height="14" fill="#33FF11"/><rect x="107" y="360" width="2" height="67" fill="#33FF11"/><rect x="113" y="413" width="2" height="14" fill="#33FF11"/><rect x="123" y="413" width="1" height="14" fill="#33FF11"/><rect x="137" y="386" width="1" height="41" fill="#33FF11"/><rect x="147" y="413" width="1" height="14" fill="#33FF11"/><rect x="149" y="399" width="2" height="28" fill="#33FF11"/><rect x="150" y="360" width="1" height="67" fill="#33FF11"/><rect x="153" y="399" width="1" height="28" fill="#33FF11"/><rect x="155" y="386" width="1" height="41" fill="#33FF11"/><rect x="157" y="399" width="1" height="28" fill="#33FF11"/><rect x="159" y="386" width="1" height="41" fill="#33FF11"/><rect x="160" y="413" width="1" height="14" fill="#33FF11"/><rect x="163" y="413" width="1" height="14" fill="#33FF11"/><rect x="166" y="386" width="1" height="41" fill="#33FF11"/><rect x="169" y="386" width="1" height="41" fill="#33FF11"/><rect x="170" y="413" width="1" height="14" fill="#33FF11"/><rect x="175" y="373" width="1" height="54" fill="#33FF11"/><rect x="181" y="386" width="1" height="41" fill="#33FF11"/><rect x="188" y="413" width="1" height="14" fill="#33FF11"/><rect x="193" y="413" width="1" height="14" fill="#33FF11"/><rect x="196" y="413" width="1" height="14" fill="#33FF11"/><rect x="198" y="399" width="1" height="28" fill="#33FF11"/><rect x="200" y="413" width="1" height="14" fill="#33FF11"/><rect x="212" y="413" width="1" height="14" fill="#33FF11"/><rect x="215" y="413" width="1" height="14" fill="#33FF11"/><rect x="217" y="413" width="4" height="14" fill="#33FF11"/><rect x="225" y="413" width="3" height="14" fill="#33FF11"/><rect x="227" y="386" width="1" height="41" fill="#33FF11"/><rect x="229" y="413" width="1" height="14" fill="#33FF11"/><rect x="236" y="413" width="1" height="14" fill="#33FF11"/><rect x="241" y="413" width="1" height="14" fill="#33FF11"/><rect x="244" y="413" width="1" height="14" fill="#33FF11"/><rect x="249" y="399" width="1" height="28" fill="#33FF11"/><rect x="302" y="413" width="1" height="14" fill="#33FF11"/><rect x="308" y="360" width="1" height="67" fill="#33FF11"/><rect x="318" y="386" width="2" height="41" fill="#33FF11"/><rect x="323" y="413" width="1" height="14" fill="#33FF11"/><rect x="328" y="399" width="1" height="28" fill="#33FF11"/><rect x="346" y="413" width="1" height="14" fill="#33FF11"/><rect x="350" y="360" width="1" height="67" fill="#33FF11"/><rect x="351" y="386" width="1" height="41" fill="#33FF11"/><rect x="353" y="373" width="1" height="54" fill="#33FF11"/><rect x="364" y="413" width="2" height="14" fill="#33FF11"/><rect x="365" y="399" width="1" height="28" fill="#33FF11"/><rect x="366" y="360" width="1" height="67" fill="#33FF11"/><rect x="368" y="399" width="1" height="28" fill="#33FF11"/><rect x="370" y="413" width="4" height="14" fill="#33FF11"/><rect x="371" y="399" width="1" height="28" fill="#33FF11"/><rect x="373" y="386" width="1" height="41" fill="#33FF11"/><rect x="375" y="386" width="1" height="41" fill="#33FF11"/><rect x="387" y="386" width="1" height="41" fill="#33FF11"/><rect x="390" y="386" width="1" height="41" fill="#33FF11"/><rect x="395" y="360" width="1" height="67" fill="#33FF11"/><rect x="402" y="413" width="1" height="14" fill="#33FF11"/><rect x="407" y="386" width="1" height="41" fill="#33FF11"/><rect x="408" y="413" width="1" height="14" fill="#33FF11"/><rect x="411" y="413" width="1" height="14" fill="#33FF11"/><rect x="415" y="399" width="1" height="28" fill="#33FF11"/><rect x="418" y="386" width="1" height="41" fill="#33FF11"/><rect x="423" y="373" width="2" height="54" fill="#33FF11"/><rect x="425" y="373" width="1" height="54" fill="#33FF11"/><rect x="428" y="373" width="2" height="54" fill="#33FF11"/><rect x="432" y="413" width="1" height="14" fill="#33FF11"/><rect x="434" y="373" width="3" height="54" fill="#33FF11"/><rect x="434" y="320" width="1" height="107" fill="#33FF11"/><rect x="436" y="346" width="1" height="81" fill="#33FF11"/><rect x="439" y="373" width="1" height="54" fill="#33FF11"/><rect x="438" y="413" width="5" height="14" fill="#33FF11"/><rect x="443" y="333" width="1" height="94" fill="#33FF11"/><rect x="448" y="413" width="1" height="14" fill="#33FF11"/><rect x="248" y="413" width="1" height="14" fill="#33FF11"/><rect x="249" y="413" width="1" height="14" fill="#33FF11"/><rect x="250" y="413" width="1" height="14" fill="#33FF11"/><rect x="251" y="399" width="1" height="28" fill="#33FF11"/><rect x="252" y="333" width="1" height="94" fill="#33FF11"/><rect x="253" y="360" width="1" height="67" fill="#33FF11"/><rect x="254" y="360" width="1" height="67" fill="#33FF11"/><rect x="255" y="399" width="1" height="28" fill="#33FF11"/><rect x="256" y="360" width="1" height="67" fill="#33FF11"/><rect x="257" y="346" width="1" height="81" fill="#33FF11"/><rect x="258" y="386" width="1" height="41" fill="#33FF11"/><rect x="259" y="399" width="1" height="28" fill="#33FF11"/><rect x="260" y="386" width="1" height="41" fill="#33FF11"/><rect x="261" y="360" width="1" height="67" fill="#33FF11"/><rect x="262" y="386" width="1" height="41" fill="#33FF11"/><rect x="263" y="386" width="1" height="41" fill="#33FF11"/><rect x="264" y="386" width="1" height="41" fill="#33FF11"/><rect x="265" y="360" width="1" height="67" fill="#33FF11"/><rect x="266" y="373" width="1" height="54" fill="#33FF11"/><rect x="267" y="386" width="1" height="41" fill="#33FF11"/><rect x="268" y="386" width="1" height="41" fill="#33FF11"/><rect x="269" y="399" width="1" height="28" fill="#33FF11"/><rect x="270" y="333" width="1" height="94" fill="#33FF11"/><rect x="271" y="413" width="1" height="14" fill="#33FF11"/><rect x="272" y="373" width="1" height="54" fill="#33FF11"/><rect x="273" y="399" width="1" height="28" fill="#33FF11"/><rect x="274" y="373" width="1" height="54" fill="#33FF11"/><rect x="275" y="413" width="1" height="14" fill="#33FF11"/><rect x="276" y="373" width="1" height="54" fill="#33FF11"/><rect x="277" y="373" width="1" height="54" fill="#33FF11"/><rect x="278" y="413" width="1" height="14" fill="#33FF11"/><rect x="279" y="413" width="1" height="14" fill="#33FF11"/><rect x="280" y="373" width="1" height="54" fill="#33FF11"/><rect x="281" y="373" width="1" height="54" fill="#33FF11"/><rect x="282" y="413" width="1" height="14" fill="#33FF11"/><rect x="283" y="399" width="1" height="28" fill="#33FF11"/><rect x="284" y="386" width="1" height="41" fill="#33FF11"/><rect x="285" y="386" width="1" height="41" fill="#33FF11"/><rect x="286" y="413" width="1" height="14" fill="#33FF11"/><rect x="287" y="399" width="1" height="28" fill="#33FF11"/><rect x="288" y="386" width="1" height="41" fill="#33FF11"/><rect x="289" y="413" width="1" height="14" fill="#33FF11"/><rect x="290" y="413" width="1" height="14" fill="#33FF11"/><rect x="291" y="413" width="1" height="14" fill="#33FF11"/><rect x="292" y="413" width="1" height="14" fill="#33FF11"/><rect x="293" y="413" width="1" height="14" fill="#33FF11"/><rect x="294" y="413" width="1" height="14" fill="#33FF11"/><rect x="295" y="413" width="1" height="14" fill="#33FF11"/><rect x="296" y="413" width="1" height="14" fill="#33FF11"/><rect x="297" y="413" width="1" height="14" fill="#33FF11"/><path shape-rendering="geometricPrecision" d="M48.5 363.6 L49.5 364.9 L50.5 368.6 L51.5 366.5 L52.5 367.2 L53.5 367.1 L54.5 363.6 L55.5 364.9 L56.5 365.0 L57.5 366.9 L58.5 364.0 L59.5 364.6 L60.5 364.4 L61.5 363.8 L62.5 364.9 L63.5 365.2 L64.5 363.8 L65.5 363.8 L66.5 365.2 L67.5 367.4 L68.5 365.1 L69.5 363.1 L70.5 365.4 L71.5 366.2 L72.5 365.2 L73.5 365.0 L74.5 363.9 L75.5 364.7 L76.5 362.7 L77.5 364.9 L78.5 366.3 L79.5 364.7 L80.5 366.2 L81.5 365.3 L82.5 364.3 L83.5 362.2 L84.5 365.6 L85.5 364.4 L86.5 361.1 L87.5 366.3 L88.5 365.6 L89.5 365.8 L90.5 366.0 L91.5 363.4 L92.5 363.8 L93.5 362.5 L94.5 365.1 L95.5 363.1 L96.5 366.4 L97.5 362.2 L98.5 364.4 L99.5 365.3 L100.5 363.5 L101.5 362.7 L102.5 361.4 L103.5 364.9 L104.5 364.6 L105.5 365.5 L106.5 362.4 L107.5 365.5 L108.5 363.8 L109.5 364.1 L110.5 363.6 L111.5 362.1 L112.5 362.5 L113.5 364.4 L114.5 362.4 L115.5 362.9 L116.5 362.9 L117.5 363.3 L118.5 364.5 L119.5 361.5 L120.5 363.1 L121.5 361.8 L122.5 362.5 L123.5 361.5 L124.5 360.1 L125.5 361.8 L126.5 360.2 L127.5 364.5 L128.5 360.3 L129.5 361.4 L130.5 362.6 L131.5 361.5 L132.5 364.0 L133.5 361.4 L134.5 359.1 L135.5 362.5 L136.5 360.1 L137.5 363.9 L138.5 358.7 L139.5 359.0 L140.5 359.4 L141.5 357.4 L142.5 359.8 L143.5 360.2 L144.5 359.7 L145.5 357.3 L146.5 356.5 L147.5 358.7 L148.5 358.6 L149.5 356.4 L150.5 355.9 L151.5 355.5 L152.5 357.1 L153.5 356.7 L154.5 357.9 L155.5 358.4 L156.5 355.1 L157.5 357.5 L158.5 357.4 L159.5 356.3 L160.5 357.1 L161.5 359.0 L162.5 357.0 L163.5 356.9 L164.5 356.5 L165.5 357.5 L166.5 356.3 L167.5 357.8 L168.5 355.3 L169.5 356.0 L170.5 357.7 L171.5 359.1 L172.5 356.3 L173.5 357.2 L174.5 358.2 L175.5 356.7 L176.5 357.6 L177.5 357.8 L178.5 355.3 L179.5 354.9 L180.5 357.6 L181.5 355.8 L182.5 357.3 L183.5 357.6 L184.5 356.2 L185.5 355.9 L186.5 356.1 L187.5 359.2 L188.5 354.1 L189.5 358.7 L190.5 357.4 L191.5 356.4 L192.5 357.9 L193.5 357.3 L194.5 356.1 L195.5 357.3 L196.5 357.7 L197.5 358.2 L198.5 357.7 L199.5 357.5 L200.5 354.3 L201.5 356.6 L202.5 358.4 L203.5 358.6 L204.5 356.4 L205.5 356.7 L206.5 356.1 L207.5 355.8 L208.5 358.5 L209.5 359.1 L210.5 357.8 L211.5 358.4 L212.5 360.0 L213.5 356.4 L214.5 358.0 L215.5 357.9 L216.5 359.5 L217.5 356.1 L218.5 355.8 L219.5 358.7 L220.5 357.2 L221.5 358.6 L222.5 359.1 L223.5 359.0 L224.5 359.6 L225.5 358.7 L226.5 358.4 L227.5 356.1 L228.5 359.8 L229.5 356.5 L230.5 358.3 L231.5 360.4 L232.5 356.1 L233.5 359.6 L234.5 357.4 L235.5 358.4 L236.5 356.2 L237.5 355.6 L238.5 359.3 L239.5 361.7 L240.5 359.9 L241.5 358.9 L242.5 359.0 L243.5 361.3 L244.5 361.2 L245.5 358.0 L246.5 357.5 L247.5 361.7 L248.5 358.4 L249.5 359.9 L250.5 360.8 L251.5 339.5 L252.5 336.3 L253.5 333.9 L254.5 337.6 L255.5 336.4 L256.5 338.7 L257.5 336.2 L258.5 340.0 L259.5 338.5 L260.5 340.2 L261.5 339.4 L262.5 341.7 L263.5 343.5 L264.5 342.6 L265.5 343.0 L266.5 344.6 L267.5 344.0 L268.5 345.6 L269.5 345.5 L270.5 347.1 L271.5 345.7 L272.5 347.0 L273.5 347.6 L274.5 350.1 L275.5 349.1 L276.5 347.6 L277.5 347.8 L278.5 349.8 L279.5 349.6 L280.5 349.3 L281.5 350.1 L282.5 352.3 L283.5 349.0 L284.5 352.2 L285.5 351.8 L286.5 354.7 L287.5 350.2 L288.5 353.6 L289.5 352.8 L290.5 353.5 L291.5 354.2 L292.5 356.5 L293.5 354.5 L294.5 354.8 L295.5 352.3 L296.5 355.4 L297.5 352.7 L298.5 354.6 L299.5 355.4 L300.5 356.9 L301.5 356.3 L302.5 355.2 L303.5 356.2 L304.5 354.7 L305.5 355.1 L306.5 355.0 L307.5 356.3 L308.5 354.8 L309.5 353.7 L310.5 353.5 L311.5 358.7 L312.5 352.3 L313.5 355.2 L314.5 355.1 L315.5 355.1 L316.5 354.0 L317.5 356.3 L318.5 355.7 L319.5 354.1 L320.5 355.0 L321.5 353.7 L322.5 356.2 L323.5 358.5 L324.5 357.9 L325.5 357.1 L326.5 355.6 L327.5 355.7 L328.5 356.4 L329.5 358.0 L330.5 355.8 L331.5 355.6 L332.5 353.9 L333.5 355.8 L334.5 356.0 L335.5 354.8 L336.5 354.3 L337.5 355.8 L338.5 356.3 L339.5 354.7 L340.5 356.9 L341.5 355.3 L342.5 356.3 L343.5 358.0 L344.5 355.1 L345.5 355.8 L346.5 355.4 L347.5 355.4 L348.5 356.4 L349.5 353.6 L350.5 356.3 L351.5 353.8 L352.5 354.9 L353.5 357.1 L354.5 353.4 L355.5 357.9 L356.5 358.6 L357.5 357.6 L358.5 357.0 L359.5 356.1 L360.5 355.7 L361.5 359.2 L362.5 354.5 L363.5 356.6 L364.5 358.6 L365.5 358.2 L366.5 357.7 L367.5 360.0 L368.5 359.7 L369.5 357.1 L370.5 358.8 L371.5 358.6 L372.5 359.3 L373.5 360.5 L374.5 361.0 L375.5 358.0 L376.5 359.8 L377.5 359.0 L378.5 357.5 L379.5 360.9 L380.5 359.3 L381.5 359.7 L382.5 357.0 L383.5 360.8 L384.5 360.2 L385.5 361.1 L386.5 359.5 L387.5 362.5 L388.5 360.8 L389.5 359.6 L390.5 361.0 L391.5 361.3 L392.5 359.6 L393.5 362.1 L394.5 361.2 L395.5 361.6 L396.5 362.0 L397.5 364.2 L398.5 360.5 L399.5 359.9 L400.5 361.3 L401.5 360.5 L402.5 357.4 L403.5 363.5 L404.5 361.4 L405.5 358.4 L406.5 359.8 L407.5 361.1 L408.5 360.3 L409.5 360.2 L410.5 361.2 L411.5 362.3 L412.5 362.3 L413.5 361.2 L414.5 361.5 L415.5 358.7 L416.5 358.8 L417.5 360.9 L418.5 360.2 L419.5 361.2 L420.5 360.7 L421.5 362.8 L422.5 365.4 L423.5 363.3 L424.5 364.8 L425.5 367.5 L426.5 366.7 L427.5 365.2 L428.5 367.1 L429.5 369.3 L430.5 368.8 L431.5 365.2 L432.5 366.2 L433.5 364.3 L434.5 366.3 L435.5 365.3 L436.5 366.0 L437.5 367.7 L438.5 366.9 L439.5 367.0 L440.5 365.3 L441.5 368.9 L442.5 367.3 L443.5 365.8 L444.5 367.9 L445.5 369.6 L446.5 366.1 L447.5 368.8 L448.5 366.5 L449.5 369.7 L450.5 369.4 L451.5 368.2 L452.5 367.3 L453.5 366.7 L454.5 367.6" fill="none" stroke="#FF00FF" stroke-width="1.900" stroke-linejoin="round"/><rect x="456" y="131" width="1" height="133" fill="#E8E8F0"/><rect x="456" y="293" width="1" height="133" fill="#E8E8F0"/></svg>
<div class="grp" style="left:491px;top:124px;width:140px;height:84px"><i></i></div>
<div class="grp" style="left:491px;top:215px;width:140px;height:205px"><i></i></div>
<div class="sunk" style="left:500px;top:225px;width:83px;height:21px;background:#fff"></div>
<div class="btn " style="left:566px;top:227px;width:16px;height:17px"></div>
<svg style="left:570px;top:233px" width="7" height="4" viewBox="0 0 7 4" shape-rendering="crispEdges"><path d="M0 0h7L3.500 4z" fill="#000"/></svg>
<div class="btn " style="left:592px;top:224px;width:23px;height:23px"></div>
<svg style="left:596px;top:227px" width="14" height="16" viewBox="0 0 14 16">
<rect x="0.500" y="0.500" width="13" height="15" fill="#fff" stroke="#000" stroke-width="1.200"/>
<path d="M3.300 7.700V5.400Q3.300 4.400 4.300 4.400H6.500" fill="none" stroke="#008000" stroke-width="1.300" stroke-dasharray="1.500 0.500 4"/>
<path d="M6 1.900L9.300 4.400L6 6.900z" fill="#008000"/>
<path d="M10.700 8.100V10.300Q10.700 11.400 9.700 11.400H7.500" fill="none" stroke="#008000" stroke-width="1.300"/>
<path d="M8 8.900L4.800 11.400L8 13.900z" fill="#008000"/>
</svg>
<div class="sunk" style="left:554px;top:251px;width:60px;height:20px;background:#fff"></div>
<div class="sunk" style="left:554px;top:274px;width:60px;height:19px;background:#fff"></div>
<div class="sunk" style="left:502px;top:296px;width:13px;height:13px;background:#fff"></div>
<div class="sunk" style="left:502px;top:314px;width:13px;height:13px;background:#fff"></div>
<svg style="left:505px;top:317px" width="7" height="7" viewBox="0 0 7 7" shape-rendering="crispEdges"><path d="M0 2v3l2 2l5-5v-3l-5 5z" fill="#000"/></svg>
<div class="sunk" style="left:502px;top:329px;width:13px;height:13px;background:#fff"></div>
<svg style="left:505px;top:332px" width="7" height="7" viewBox="0 0 7 7" shape-rendering="crispEdges"><path d="M0 2v3l2 2l5-5v-3l-5 5z" fill="#000"/></svg>
<div class="sunk" style="left:502px;top:345px;width:13px;height:13px;background:#fff"></div>
<svg style="left:505px;top:348px" width="7" height="7" viewBox="0 0 7 7" shape-rendering="crispEdges"><path d="M0 2v3l2 2l5-5v-3l-5 5z" fill="#000"/></svg>
<div class="sunk" style="left:502px;top:360px;width:13px;height:13px;background:#fff"></div>
<svg style="left:505px;top:363px" width="7" height="7" viewBox="0 0 7 7" shape-rendering="crispEdges"><path d="M0 2v3l2 2l5-5v-3l-5 5z" fill="#000"/></svg>
<div class="sunk" style="left:502px;top:376px;width:13px;height:13px;background:#D4D0C8"></div>
<svg style="left:505px;top:379px" width="7" height="7" viewBox="0 0 7 7" shape-rendering="crispEdges"><path d="M0 2v3l2 2l5-5v-3l-5 5z" fill="#808080"/></svg>
<div class="btn " style="left:527px;top:393px;width:98px;height:23px"></div>
<div class="grp" style="left:491px;top:425px;width:140px;height:27px"><i></i></div>
<div class="grp" style="left:491px;top:457px;width:140px;height:57px"><i></i></div>
<svg style="left:579px;top:461px" width="40" height="40" viewBox="0 0 40 40">
<defs><radialGradient id="wd" cx="50%" cy="50%" r="50%"><stop offset="0" stop-color="#e2dfd9"/><stop offset="0.750" stop-color="#dad7d0"/><stop offset="1" stop-color="#c2bfb8"/></radialGradient></defs>
<circle cx="20.300" cy="20.400" r="17.600" fill="url(#wd)"/>
<circle cx="20.300" cy="20.400" r="5" fill="#d2cfc8" stroke="#ebe9e4" stroke-width="2"/>
<circle cx="20.300" cy="20.400" r="2" fill="#d8d5ce"/>
</svg>
<div class="wm">CDRLabs.com</div>
<div class="grp" style="left:14px;top:457px;width:148px;height:57px"><i></i></div>
<div style="left:22px;top:452px;width:55px;height:12px;background:#D4D0C8;"></div>
<div style="left:24px;top:454px;width:8px;height:8px;background:#000;"></div>
<div style="left:25px;top:455px;width:6px;height:6px;background:#00FFFF;"></div>
<div class="grp" style="left:172px;top:457px;width:147px;height:57px"><i></i></div>
<div style="left:180px;top:452px;width:64px;height:12px;background:#D4D0C8;"></div>
<div style="left:182px;top:454px;width:8px;height:8px;background:#000;"></div>
<div style="left:183px;top:455px;width:6px;height:6px;background:#FFFF00;"></div>
<div class="grp" style="left:331px;top:457px;width:148px;height:43px"><i></i></div>
<div style="left:339px;top:452px;width:37px;height:12px;background:#D4D0C8;"></div>
<div style="left:341px;top:454px;width:8px;height:8px;background:#000;"></div>
<div style="left:342px;top:455px;width:6px;height:6px;background:#FF00FF;"></div>
<span class="t" id="t0" style="left:22.83px;top:7px;color:#fff;font-weight:bold;letter-spacing:0.258px">Nero CD-DVD Speed 4.7.7.3</span>
<span class="t" id="t1" style="left:9.40px;top:26px;letter-spacing:-0.300px;transform:scaleX(0.9556)">File</span>
<span class="t" id="t2" style="left:37.20px;top:26px;letter-spacing:-0.015px">Run Test</span>
<span class="t" id="t3" style="left:92.56px;top:26px;letter-spacing:0.122px">Extra</span>
<span class="t" id="t4" style="left:130.30px;top:26px;letter-spacing:-0.300px;transform:scaleX(0.9802)">Help</span>
<span class="t" id="t5" style="left:176.85px;top:58px;letter-spacing:0.300px;transform:scaleX(1.1500)">[0:0]</span>
<span class="t" id="t6" style="left:209.90px;top:58px;letter-spacing:-0.300px;transform:scaleX(0.9465)">BENQ DVD DD DW1640 BSLB</span>
<span class="t" id="t7" style="left:498.75px;top:57px;letter-spacing:0.300px;transform:scaleX(1.0027)">Start</span>
<span class="t" id="t8" style="left:583.12px;top:57px;letter-spacing:0.039px">Exit</span>
<span class="t" id="t9" style="left:18.10px;top:97px;letter-spacing:-0.149px">Benchmark</span>
<span class="t" id="t10" style="left:83.90px;top:97px;letter-spacing:-0.179px">Create Disc</span>
<span class="t" id="t11" style="left:151.20px;top:97px;letter-spacing:-0.033px">Disc Info</span>
<span class="t" id="t12" style="left:272.50px;top:97px;letter-spacing:-0.089px">Advanced Disc Quality</span>
<span class="t" id="t13" style="left:393.50px;top:97px;letter-spacing:-0.046px">ScanDisc</span>
<span class="t" id="t14" style="left:205.30px;top:95px;letter-spacing:-0.166px">Disc Quality</span>
<span class="t" id="t15" style="left:23.44px;top:124px">500</span>
<span class="t" id="t16" style="left:23.44px;top:151px">400</span>
<span class="t" id="t17" style="left:23.44px;top:178px">300</span>
<span class="t" id="t18" style="left:23.44px;top:204px">200</span>
<span class="t" id="t19" style="left:23.44px;top:231px">100</span>
<span class="t" id="t20" style="left:469.80px;top:124px">20</span>
<span class="t" id="t21" style="left:469.80px;top:151px">16</span>
<span class="t" id="t22" style="left:469.80px;top:178px">12</span>
<span class="t" id="t23" style="left:469.80px;top:204px">8</span>
<span class="t" id="t24" style="left:469.80px;top:231px">4</span>
<span class="t" id="t25" style="left:29.55px;top:286px">10</span>
<span class="t" id="t26" style="left:35.67px;top:313px">8</span>
<span class="t" id="t27" style="left:35.67px;top:340px">6</span>
<span class="t" id="t28" style="left:35.67px;top:366px">4</span>
<span class="t" id="t29" style="left:35.67px;top:393px">2</span>
<span class="t" id="t30" style="left:469.80px;top:286px">20</span>
<span class="t" id="t31" style="left:469.80px;top:313px">16</span>
<span class="t" id="t32" style="left:469.80px;top:340px">12</span>
<span class="t" id="t33" style="left:469.80px;top:366px">8</span>
<span class="t" id="t34" style="left:469.80px;top:393px">4</span>
<span class="t" id="t35" style="left:41.63px;top:268px;letter-spacing:0.068px">0.0</span>
<span class="t" id="t36" style="left:41.63px;top:430px;letter-spacing:0.068px">0.0</span>
<span class="t" id="t37" style="left:93.88px;top:268px;letter-spacing:0.068px">1.0</span>
<span class="t" id="t38" style="left:93.88px;top:430px;letter-spacing:0.068px">1.0</span>
<span class="t" id="t39" style="left:146.13px;top:268px;letter-spacing:0.068px">2.0</span>
<span class="t" id="t40" style="left:146.13px;top:430px;letter-spacing:0.068px">2.0</span>
<span class="t" id="t41" style="left:198.38px;top:268px;letter-spacing:0.068px">3.0</span>
<span class="t" id="t42" style="left:198.38px;top:430px;letter-spacing:0.068px">3.0</span>
<span class="t" id="t43" style="left:250.63px;top:268px;letter-spacing:0.068px">4.0</span>
<span class="t" id="t44" style="left:250.63px;top:430px;letter-spacing:0.068px">4.0</span>
<span class="t" id="t45" style="left:302.88px;top:268px;letter-spacing:0.068px">5.0</span>
<span class="t" id="t46" style="left:302.88px;top:430px;letter-spacing:0.068px">5.0</span>
<span class="t" id="t47" style="left:355.13px;top:268px;letter-spacing:0.068px">6.0</span>
<span class="t" id="t48" style="left:355.13px;top:430px;letter-spacing:0.068px">6.0</span>
<span class="t" id="t49" style="left:407.38px;top:268px;letter-spacing:0.068px">7.0</span>
<span class="t" id="t50" style="left:407.38px;top:430px;letter-spacing:0.068px">7.0</span>
<span class="t" id="t51" style="left:459.63px;top:268px;letter-spacing:0.068px">8.0</span>
<span class="t" id="t52" style="left:459.63px;top:430px;letter-spacing:0.068px">8.0</span>
<span class="t" id="t53" style="left:499.90px;top:120px;letter-spacing:-0.010px;background:#D4D0C8;padding:0 2px;margin-left:-2px">Disc info</span>
<span class="t" id="t54" style="left:499.40px;top:134px;letter-spacing:-0.241px">Type:</span>
<span class="t" id="t55" style="left:544.80px;top:134px;color:#00007B;letter-spacing:-0.015px">DVD+R DL</span>
<span class="t" id="t56" style="left:499.40px;top:151px;letter-spacing:-0.254px">ID:</span>
<span class="t" id="t57" style="left:544.80px;top:151px;color:#00007B;letter-spacing:-0.040px">MKM 003</span>
<span class="t" id="t58" style="left:499.40px;top:169px;letter-spacing:-0.219px">Date:</span>
<span class="t" id="t59" style="left:544.80px;top:169px;color:#00007B;letter-spacing:-0.078px">12 Jun 2008</span>
<span class="t" id="t60" style="left:499.40px;top:187px;letter-spacing:-0.297px">Label:</span>
<span class="t" id="t61" style="left:544.88px;top:187px;color:#00007B;letter-spacing:0.161px">New</span>
<span class="t" id="t62" style="left:500.10px;top:211px;letter-spacing:-0.194px;background:#D4D0C8;padding:0 2px;margin-left:-2px">Settings</span>
<span class="t" id="t63" style="left:503.98px;top:230px;letter-spacing:0.161px">8 X</span>
<span class="t" id="t64" style="left:501.90px;top:257px;letter-spacing:-0.299px">Start:</span>
<span class="t" id="t65" style="left:501.90px;top:280px;letter-spacing:-0.300px;transform:scaleX(0.9888)">End:</span>
<span class="t" id="t66" style="left:557.50px;top:255px;letter-spacing:-0.290px">0000 MB</span>
<span class="t" id="t67" style="left:557.50px;top:278px;letter-spacing:-0.290px">8000 MB</span>
<span class="t" id="t68" style="left:520.20px;top:297px;letter-spacing:-0.002px">Quick scan</span>
<span class="t" id="t69" style="left:520.20px;top:315px;letter-spacing:-0.093px">Show C1/PIE</span>
<span class="t" id="t70" style="left:520.20px;top:330px;letter-spacing:-0.083px">Show C2/PIF</span>
<span class="t" id="t71" style="left:520.20px;top:346px;letter-spacing:-0.178px">Show jitter</span>
<span class="t" id="t72" style="left:520.20px;top:361px;letter-spacing:-0.128px">Show read speed</span>
<span class="t" id="t73" style="left:521.20px;top:378px;color:#fff;letter-spacing:-0.139px">Show write speed</span>
<span class="t" id="t74" style="left:520.20px;top:377px;color:#808080;letter-spacing:-0.139px">Show write speed</span>
<span class="t" id="t75" style="left:550.43px;top:398px;letter-spacing:0.258px">Advanced</span>
<span class="t" id="t76" style="left:501.90px;top:433px;letter-spacing:-0.225px">Quality score:</span>
<span class="t" id="t77" style="left:608.10px;top:433px;color:#00007B;letter-spacing:0.300px;transform:scaleX(1.0350)">95</span>
<span class="t" id="t78" style="left:501.70px;top:467px;letter-spacing:-0.300px;transform:scaleX(0.9870)">Progress:</span>
<span class="t" id="t79" style="left:501.70px;top:483px;letter-spacing:-0.234px">Position:</span>
<span class="t" id="t80" style="left:501.70px;top:498px;letter-spacing:-0.163px">Speed:</span>
<span class="t" id="t81" style="left:592.50px;top:467px;color:#00007B;letter-spacing:-0.300px;transform:scaleX(0.9898)">100 %</span>
<span class="t" id="t82" style="left:578.30px;top:483px;color:#00007B;letter-spacing:-0.062px">7999 MB</span>
<span class="t" id="t83" style="left:590.70px;top:498px;color:#00007B;letter-spacing:-0.102px">3.35 X</span>
<span class="t" id="t84" style="left:34.30px;top:452px;letter-spacing:-0.300px;transform:scaleX(0.9974)">PI Errors</span>
<span class="t" id="t85" style="left:192.30px;top:452px;letter-spacing:-0.298px">PI Failures</span>
<span class="t" id="t86" style="left:351.30px;top:452px;letter-spacing:-0.157px">Jitter</span>
<span class="t" id="t87" style="left:21.40px;top:468px;letter-spacing:-0.029px">Average:</span>
<span class="t" id="t88" style="left:123.20px;top:468px;color:#00007B;letter-spacing:0.074px">14.59</span>
<span class="t" id="t89" style="left:21.40px;top:483px;letter-spacing:-0.300px;transform:scaleX(0.9786)">Maximum:</span>
<span class="t" id="t90" style="left:132.30px;top:483px;color:#00007B;letter-spacing:0.147px">347</span>
<span class="t" id="t91" style="left:22.41px;top:498px;letter-spacing:0.017px">Total:</span>
<span class="t" id="t92" style="left:114.50px;top:498px;color:#00007B;letter-spacing:-0.020px">466693</span>
<span class="t" id="t93" style="left:180.50px;top:468px;letter-spacing:-0.029px">Average:</span>
<span class="t" id="t94" style="left:288.10px;top:468px;color:#00007B;letter-spacing:-0.055px">0.01</span>
<span class="t" id="t95" style="left:180.50px;top:483px;letter-spacing:-0.300px;transform:scaleX(0.9786)">Maximum:</span>
<span class="t" id="t96" style="left:303.40px;top:483px;color:#00007B;letter-spacing:-0.225px">8</span>
<span class="t" id="t97" style="left:181.51px;top:498px;letter-spacing:0.017px">Total:</span>
<span class="t" id="t98" style="left:285.60px;top:498px;color:#00007B;letter-spacing:-0.196px">3404</span>
<span class="t" id="t99" style="left:339.80px;top:468px;letter-spacing:-0.029px">Average:</span>
<span class="t" id="t100" style="left:436.10px;top:468px;color:#00007B;letter-spacing:-0.258px">9.97 %</span>
<span class="t" id="t101" style="left:339.80px;top:483px;letter-spacing:-0.300px;transform:scaleX(0.9786)">Maximum:</span>
<span class="t" id="t102" style="left:435.40px;top:483px;color:#00007B;letter-spacing:-0.142px">13.7 %</span>
<span class="t" id="t103" style="left:340.00px;top:501px;letter-spacing:-0.289px">PO failures:</span>
<span class="t" id="t104" style="left:462.70px;top:501px;color:#00007B;letter-spacing:-0.025px">0</span>
</body></html>
